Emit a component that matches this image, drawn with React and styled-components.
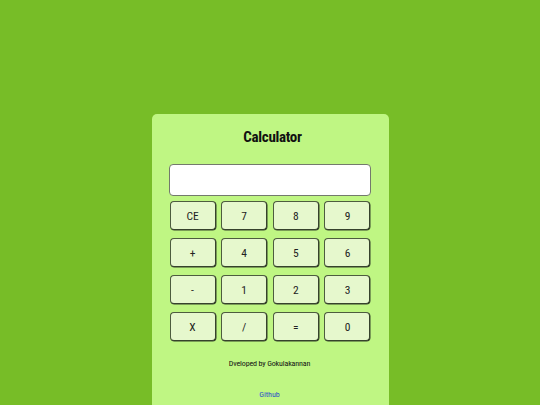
import React, { useState } from 'react'
import styled, { createGlobalStyle } from 'styled-components'

const GlobalStyle = createGlobalStyle`
    html, body {
        margin: 0;
        padding: 0;
        background-color: #77bd27;
        font-family: "Roboto Condensed", Roboto, sans-serif;
    }
`

const Page = styled.div`
    display: flex;
    justify-content: center;
    padding-top: 114px;
    box-sizing: border-box;
    overflow: hidden;
    height: 405px;
`

const Card = styled.div`
    width: 237px;
    background-color: #bff683;
    border-radius: 5px;
    padding: 0 18px 0 17px;
    box-sizing: border-box;
    display: flex;
    flex-direction: column;
    height: 320px;
`

const Title = styled.h1`
    margin: 13px 0 0;
    padding-left: 6px;
    font-family: "Roboto Condensed", sans-serif;
    font-size: 15px;
    letter-spacing: -0.3px;
    font-weight: bold;
    text-align: center;
    line-height: 20px;
    color: #111;
`

const Display = styled.input`
    margin-top: 17px;
    height: 32px;
    box-sizing: border-box;
    border: 1.5px solid #737a6c;
    border-radius: 4px;
    background: #fff;
    outline: none;
    font-size: 16px;
    padding: 0 8px;
`

const Keys = styled.div`
    display: grid;
    grid-template-columns: repeat(4, 46px);
    justify-content: space-between;
    row-gap: 8px;
    margin-top: 5px;
    padding-left: 1px;
`

const Key = styled.button`
    height: 29px;
    background-color: #e6f8cd;
    border: 1.5px solid #4d5c3f;
    border-right-color: #36422c;
    border-bottom-color: #36422c;
    border-radius: 4px;
    box-shadow: 0.5px 0.5px 0 #36422c;
    font-family: "Roboto Condensed", sans-serif;
    font-size: 11.5px;
    color: #222;
    cursor: pointer;
    padding: 0;
`

const Footer = styled.p`
    margin: 18px 0 0;
    font-family: "Roboto Condensed", sans-serif;
    font-size: 8px;
    letter-spacing: -0.15px;
    line-height: 10px;
    text-align: center;
    color: #111;
`

const Link = styled.a`
    display: block;
    margin-top: 21px;
    font-family: "Roboto Condensed", sans-serif;
    font-size: 8px;
    line-height: 10px;
    text-align: center;
    color: #2a4fc8;
    text-decoration: none;
`

const keys = ['CE', '7', '8', '9', '+', '4', '5', '6', '-', '1', '2', '3', 'X', '/', '=', '0']

const App = () => {
    const [value, setValue] = useState('')

    const press = (k) => {
        if (k === 'CE') return setValue('')
        setValue(value + k)
    }

    return (
        <React.Fragment>
            <GlobalStyle />
            <Page>
                <Card>
                    <Title>Calculator</Title>
                    <Display value={value} readOnly />
                    <Keys>
                        {keys.map((k) => (
                            <Key key={k} onClick={() => press(k)}>{k}</Key>
                        ))}
                    </Keys>
                    <Footer>Dveloped by Gokulakannan</Footer>
                    <Link href="#">Github</Link>
                </Card>
            </Page>
        </React.Fragment>
    )
}

export default App
